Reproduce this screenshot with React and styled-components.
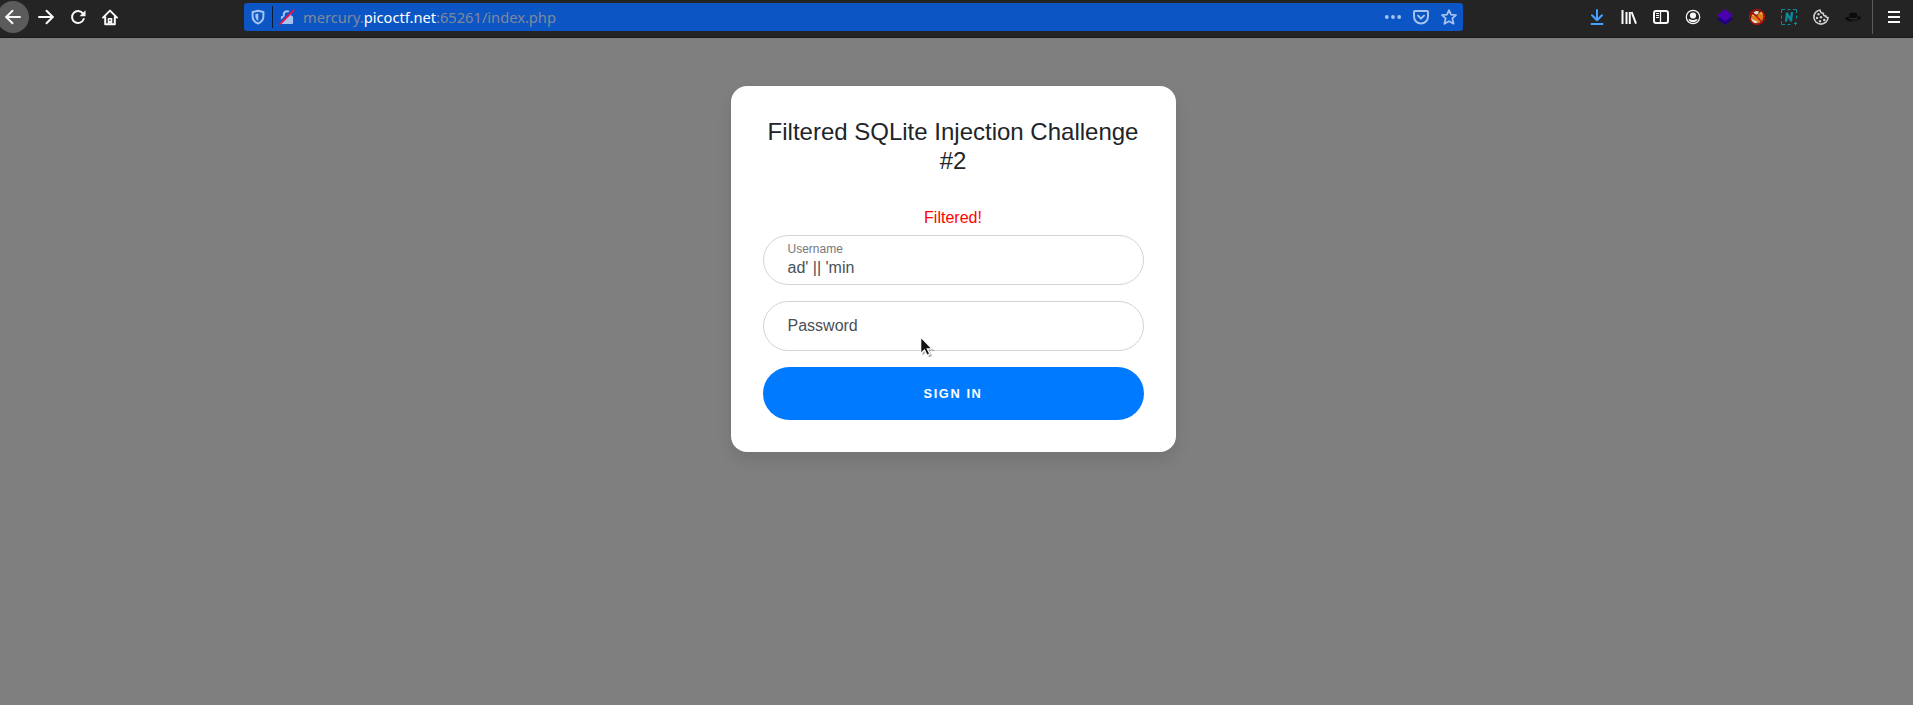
import React from 'react';
import styled, { createGlobalStyle } from 'styled-components';

const GlobalStyle = createGlobalStyle`
  *, *::before, *::after { box-sizing: border-box; }
  html, body, #root { height: 100%; }
  body {
    margin: 0;
    overflow: hidden;
    background: #7f7f7f;
    color: #212529;
    font: 400 16px/24px "Liberation Sans", Arial, sans-serif;
  }
`;

const Page = styled.div`
  display: flex;
  flex-direction: column;
  height: 100%;
`;

const Toolbar = styled.header`
  display: flex;
  flex: none;
  align-items: center;
  height: 38px;
  padding-bottom: 4px;
  background: #242424;
  border-bottom: 1px solid #1a1a1a;
`;

const NavGroup = styled.nav`
  display: flex;
  width: 247px;
  margin-left: -3px;
`;

const IconButton = styled.button`
  display: flex;
  align-items: center;
  justify-content: center;
  width: 32px;
  height: 32px;
  padding: 0;
  margin-right: ${({ $filled }) => ($filled ? 1 : 0)}px;
  border: 0;
  border-radius: 50%;
  background: ${({ $filled }) => ($filled ? '#5b5b5b' : 'transparent')};
`;

const Glyph = styled.svg`
  display: block;
  flex: none;
  width: 16px;
  height: 16px;
  overflow: visible;
  fill: none;
  stroke: ${({ $color }) => $color || '#f9f9fa'};
  stroke-width: ${({ $weight }) => $weight || 2};
  stroke-linecap: ${({ $cap }) => $cap || 'round'};
  stroke-linejoin: round;
`;

const AddressBar = styled.div`
  display: flex;
  align-items: center;
  width: 1219px;
  height: 28px;
  padding: 0 6px;
  border-radius: 3px;
  background: #0c55c4;
`;

const Identity = styled.div`
  display: flex;
  align-items: center;
  width: 53px;
`;

const Separator = styled.span`
  width: 1px;
  height: ${({ $height }) => $height}px;
  margin: ${({ $margin }) => $margin};
  background: ${({ $color }) => $color};
`;

const Url = styled.span`
  flex: 1;
  color: #80899a;
  font: 400 14.667px/28px "Noto Sans", sans-serif;
  white-space: nowrap;
`;

const Host = styled.span`
  color: #fff;
`;

const PageActions = styled.div`
  display: flex;
  align-items: center;
  gap: 12px;
`;

const Extensions = styled.div`
  display: flex;
  margin-left: 118px;
`;

const Main = styled.main`
  flex: 1;
  display: flex;
  align-items: flex-start;
  justify-content: center;
  padding: 48px 7px 0 0;
`;

const Card = styled.form`
  position: relative;
  width: 445px;
  height: 366px;
  padding: 32px;
  border-radius: 16px;
  background: #fff;
  box-shadow: 0 8px 16px rgba(0, 0, 0, 0.1);
`;

const Title = styled.h5`
  margin: 0 0 30.4px;
  font-size: 24px;
  font-weight: 400;
  line-height: 28.8px;
  text-align: center;
`;

const ErrorText = styled.div`
  height: 29px;
  color: #f00;
  text-align: center;
`;

const Field = styled.label`
  display: flex;
  flex-direction: column;
  justify-content: center;
  height: 50px;
  margin-bottom: 16px;
  padding: ${({ $filled }) => ($filled ? '2px' : 0)} 24px 0;
  border: 1px solid #ced4da;
  border-radius: 25px;
  color: #495057;
`;

const FieldLabel = styled.span`
  color: ${({ $floating }) => ($floating ? '#777' : '#495057')};
  font-size: ${({ $floating }) => ($floating ? 12 : 16)}px;
  line-height: ${({ $floating }) => ($floating ? 14 : 24)}px;
`;

const FieldValue = styled.span`
  line-height: 24px;
`;

const SubmitButton = styled.button`
  display: block;
  width: 100%;
  height: 53px;
  padding: 1px 0 0;
  border: 0;
  border-radius: 27px;
  background: #007bff;
  color: #fff;
  font: 700 12.8px/20px "Liberation Sans", Arial, sans-serif;
  letter-spacing: 1.6px;
`;

const Pointer = styled.svg`
  position: absolute;
  left: 189px;
  top: 249.5px;
  width: 15px;
  height: 22px;
  overflow: visible;
`;

const BackIcon = () => (
  <Glyph><path d="M15 8H1M7.5 1.8 1.2 8l6.3 6.2" /></Glyph>
);
const ForwardIcon = () => (
  <Glyph><path d="M1 8h14M8.5 1.8 14.8 8l-6.3 6.2" /></Glyph>
);
const ReloadIcon = () => (
  <Glyph>
    <path d="M13 4.6A6 6 0 1 0 13.7 10" />
    <path d="M15.5 1.2v6h-6z" fill="#f9f9fa" stroke="none" />
  </Glyph>
);
const HomeIcon = () => (
  <Glyph>
    <path d="m1 8.6 7-7 7 7M3.2 8v7.3h9.6V8" />
    <path d="M6.5 14.5V9.7h3v4.8M8 12.5v1" strokeWidth="1.6" />
  </Glyph>
);
const ShieldIcon = () => (
  <Glyph $color="#a5c3ef">
    <path d="M8 1.8 13.4 3v4.6c0 3.3-1.9 5.6-5.4 7-3.5-1.4-5.4-3.7-5.4-7V3z" />
    <path d="M8.3 4.5v7.4C6.3 10.8 5.4 9.5 5.4 7.6V5.1z" fill="#a5c3ef" stroke="none" />
  </Glyph>
);
const InsecureLockIcon = () => (
  <Glyph $color="#a5c3ef" $cap="butt">
    <path d="M4.8 8V5a3.3 3.3 0 0 1 6.5 0v3" />
    <path d="M3.2 7h9.6a1.3 1.3 0 0 1 1.3 1.3v5.4a1.3 1.3 0 0 1-1.3 1.3H3.2a1.3 1.3 0 0 1-1.3-1.3V8.3A1.3 1.3 0 0 1 3.2 7z" fill="#a5c3ef" stroke="none" />
    <path d="M.5 13.8 13.8.3" stroke="#0c55c4" strokeWidth="2" />
    <path d="M1.5 14.7 14.7 1.3" stroke="#f0114b" strokeWidth="1.9" strokeLinecap="round" />
  </Glyph>
);
const MoreIcon = () => (
  <Glyph>
    <g fill="#a5c3ef" stroke="none">
      <circle cx="1.8" cy="8" r="1.9" />
      <circle cx="8" cy="8" r="1.9" />
      <circle cx="14.2" cy="8" r="1.9" />
    </g>
  </Glyph>
);
const PocketIcon = () => (
  <Glyph $color="#a5c3ef">
    <path d="M2 2h12a1 1 0 0 1 1 1v4.5a7 7 0 0 1-14 0V3a1 1 0 0 1 1-1z" />
    <path d="m5 6.6 3 3 3-3" />
  </Glyph>
);
const StarIcon = () => (
  <Glyph $color="#a5c3ef" $weight="1.8">
    <path d="m8 1.2 2 4.4 5 .5-3.7 3.3 1.3 5.3L8 12.2l-4.6 2.5 1.3-5.3L1 6.1l5-.5z" />
  </Glyph>
);
const DownloadIcon = () => (
  <Glyph $color="#45a1ff"><path d="M8 1v10M3 6.3l5 5 5-5M2.500 15h11" /></Glyph>
);
const LibraryIcon = () => (
  <Glyph $cap="butt">
    <path d="M1.5 1v14M5.5 3v12M8.8 3v12M10.6 3 15 14.7" />
  </Glyph>
);
const SidebarIcon = () => (
  <Glyph $cap="butt">
    <rect x="1" y="2" width="14" height="12" rx="2" />
    <path d="M7.5 2v12" strokeWidth="1.3" />
    <path d="M3 4.5h3M3 6.5h3M3 8.5h3" strokeWidth="1" />
  </Glyph>
);
const AccountIcon = () => (
  <Glyph $weight="1.2">
    <circle cx="8" cy="8" r="6.7" />
    <g fill="#f9f9fa" stroke="none">
      <circle cx="8" cy="6.5" r="3.1" />
      <path d="M3.3 10.5c1-.3 1.8-.3 2.5 0 1.4.7 3 .7 4.4 0 .7-.3 1.5-.3 2.5 0-1.1 1.9-2.7 2.7-4.7 2.7s-3.6-.8-4.7-2.7z" />
    </g>
  </Glyph>
);
const LayersIcon = () => (
  <Glyph>
    <g stroke="none">
      <path d="m0 10 8-5 8 5-8 6z" fill="#210080" />
      <path d="M0 6.2 8 0l8 6.2-8 6z" fill="#4b00ae" />
    </g>
  </Glyph>
);
const FoxIcon = () => (
  <Glyph $weight="1.3">
    <path d="M3 4.8 5.3 6 8 7l2-3.3 4-.7.8 4-1.6 5-3.7 2.6-4.5-.3L2 11l.2-3z" fill="#df7e1b" stroke="none" />
    <path d="M4 3.5 7 2l3 .2-1.2 3-2.3.5z" fill="#f1dcc0" stroke="none" />
    <path d="M2 9.5 5 11l3.5 1.5L7 14.5l-3-1.3z" fill="#dedede" stroke="none" />
    <path d="m10.5 3.8 2.6-.8v3zM3 6.5l1.5-.7.7 1.8z" fill="#ffc04a" stroke="none" />
    <circle cx="8" cy="8" r="7.4" stroke="#bd0b0b" />
    <path d="m2.8 2.8 10.4 10.4" stroke="#bd0b0b" />
  </Glyph>
);
const NetIcon = () => (
  <Glyph $color="#0a8c9d" $weight="1" $cap="butt">
    <path d="M.5 4V.5H4M6.5.5h3M12 .5h3.5V4M.5 6.5v3M.5 12v3.5H4M6.5 15.5h3M15.5 6.5v3M12.8 14.5h3.4M14.5 12.8v3.4" />
    <path d="M5 12.6 6 4.5l4 7L11 3.2" strokeWidth="2.3" />
  </Glyph>
);
const CookieIcon = () => (
  <Glyph $color="#d1d1d1" $weight="1.6">
    <path d="M7 1a7.1 7.1 0 1 0 8.1 7.5c-1.5.3-2.5-.6-2.4-1.7-1.8.3-2.8-1-2.2-2.4C8.5 4.5 7.2 3 7 1z" />
    <g fill="#d1d1d1" stroke="none">
      <circle cx="5.5" cy="5.3" r="1.2" />
      <circle cx="4" cy="9" r="1.2" />
      <circle cx="8" cy="8.3" r="1.3" />
      <circle cx="7" cy="12.2" r="1.2" />
      <circle cx="11.3" cy="11" r="1.3" />
    </g>
  </Glyph>
);
const HatIcon = () => (
  <Glyph>
    <g stroke="none">
      <path d="M.2 9.2C.5 8 2.500 8 4 8.2l.6-3.900c1-.7 2.400-.4 3.500-.4s2.700-.5 3.600.2l.8 3.900c1.700-.6 3.300-.6 3.500.5-.7 1.900-4 3.600-8 3.900C4.500 12.600.8 11.500.2 9.200z" fill="#0b0b0b" />
      <path d="M4.200 8.400c2.500 1.200 5.800 1 8.200-.2v1c-2.500 1-5.700 1-8.200.2zM7 10.800c3 .1 5-.6 6.500-1.600-.8 1.500-3 2.400-6.500 2.400z" fill="#363636" />
    </g>
  </Glyph>
);
const MenuIcon = () => (
  <Glyph $cap="butt"><path d="M2 3h12M2 8h12M2 13h12" /></Glyph>
);

const navIcons = [BackIcon, ForwardIcon, ReloadIcon, HomeIcon];
const extensionIcons = [
  DownloadIcon, LibraryIcon, SidebarIcon, AccountIcon, LayersIcon,
  FoxIcon, NetIcon, CookieIcon, HatIcon,
];

export default function App() {
  return (
    <Page>
      <GlobalStyle />
      <Toolbar>
        <NavGroup>
          {navIcons.map((Icon, i) => (
            <IconButton key={i} $filled={i === 0}><Icon /></IconButton>
          ))}
        </NavGroup>
        <AddressBar>
          <Identity>
            <ShieldIcon />
            <Separator $height={22} $margin="0 6px" $color="#0b1c38" />
            <InsecureLockIcon />
          </Identity>
          <Url>mercury.<Host>picoctf.net</Host>:65261/index.php</Url>
          <PageActions>
            <MoreIcon />
            <PocketIcon />
            <StarIcon />
          </PageActions>
        </AddressBar>
        <Extensions>
          {extensionIcons.map((Icon, i) => (
            <IconButton key={i}><Icon /></IconButton>
          ))}
        </Extensions>
        <Separator $height={34} $margin="0 5px 0 3px" $color="#5a5a5a" />
        <IconButton><MenuIcon /></IconButton>
      </Toolbar>
      <Main>
        <Card>
          <Title>Filtered SQLite Injection Challenge #2</Title>
          <ErrorText>Filtered!</ErrorText>
          <Field $filled>
            <FieldLabel $floating>Username</FieldLabel>
            <FieldValue>ad' || 'min</FieldValue>
          </Field>
          <Field>
            <FieldLabel>Password</FieldLabel>
          </Field>
          <SubmitButton type="button">SIGN IN</SubmitButton>
          <Pointer viewBox="0 0 15 22">
            <path d="M1.5 1.5v17l4-3.7 2.6 5.5 3-1.4-2.6-5.3h5z" fill="#000" fillOpacity="0.3" transform="translate(1 1)" />
            <path d="M.7 1v16.5l3.8-3.5 2.5 5.3 2.8-1.3-2.5-5.1H12z" fill="#111" stroke="#fff" strokeWidth="1.2" />
          </Pointer>
        </Card>
      </Main>
    </Page>
  );
}
